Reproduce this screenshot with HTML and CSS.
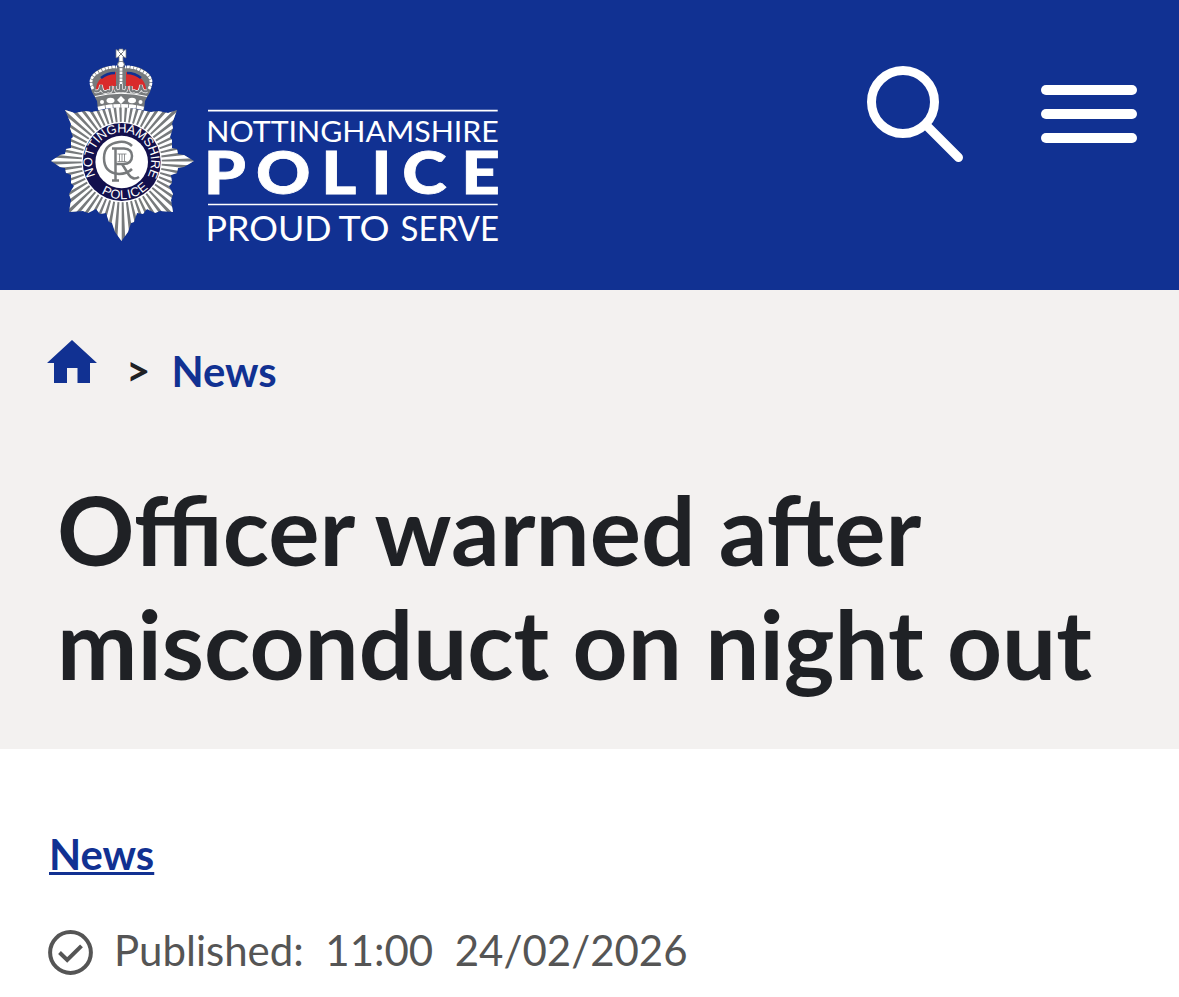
FILE: index.html
```html
<!DOCTYPE html>
<html lang="en">
<head>
    <meta charset="UTF-8">
    <meta name="viewport" content="width=device-width, initial-scale=1.0">
    <title>Officer warned after misconduct on night out</title>
    <link rel="stylesheet" href="styles.css">
</head>
<body>
    <header class="site-header">
        <a class="logo" aria-label="Nottinghamshire Police">
            <svg width="460" height="210" viewBox="48 46 460 210">
                <defs>
                    <clipPath id="star">
                        <path d="M51 161L60 155L65 154L66 149L71 148L71 139L73 137L70 128L71 124L65 110L75 113L85 111L92 112L121 106L151 112L158 111L168 113L177 110L172 124L173 128L170 137L172 140L172 148L177 149L178 154L184 155L194 161L184 167L178 168L177 173L171 175L172 183L169 186L173 194L171 200L173 212L160 211L155 213L147 209L143 214L137 213L134 222L131 223L128 232L121.500 241L115 232L112 223L109 222L106 213L100 214L96 209L88 213L83 211L69 212L71 200L69 194L74 186L71 183L71 175L66 173L65 168L60 167Z"/>
                    </clipPath>
                    <path id="ringTop" d="M95.600 175.500A29.400 29.400 0 1 1 147.800 175.500"/>
                    <path id="ringBottom" d="M84 164A37.800 37.800 0 0 0 159.400 164"/>
                </defs>

                <!-- star -->
                <g clip-path="url(#star)">
                    <rect x="48" y="100" width="150" height="145" fill="#777a7c"/>
                    <circle class="rays" cx="121.700" cy="161.500" r="60" pathLength="120"/>
                </g>

                <!-- crown -->
                <path d="M98 110L97 101L92 92Q86 76 98 70Q109 63 121 68Q133 63 144 70Q156 76 150 92L145 101L144 110Q121 104 98 110Z" fill="#777a7c"/>
                <path d="M96 90Q96 76 116 72V90ZM126 72Q146 76 146 90H126Z" fill="#d92a2b"/>
                <path d="M101 78Q107 73 115 73M141 78Q135 73 127 73" stroke="#113192" stroke-width="2.500" fill="none"/>
                <path class="beads" d="M93 89Q87 78 99 71.500Q109 66 117 67M149 89Q155 78 143 71.500Q133 66 125 67"/>
                <path class="beads" d="M121 68V85"/>
                <path class="fleur-edge" d="M95 91Q100 93 101 85Q102 95 108 91Q112 93 111 86M147 91Q142 93 141 85Q140 95 134 91Q130 93 131 86M121 84V92M115 86Q115 94 121 90Q127 94 127 86"/>
                <path class="fleurs" d="M95 91Q100 93 101 85Q102 95 108 91Q112 93 111 86M147 91Q142 93 141 85Q140 95 134 91Q130 93 131 86M121 84V92M115 86Q115 94 121 90Q127 94 127 86"/>
                <path d="M95 96.500Q121 90 147 96.500" stroke="#fff" stroke-width="1" fill="none"/>
                <g fill="#fff">
                    <ellipse cx="110.500" cy="100.500" rx="4" ry="2.700"/>
                    <ellipse cx="132" cy="100.500" rx="4" ry="2.700"/>
                    <path d="M121 96l4 4-4 4-4-4z"/>
                    <circle cx="102" cy="102" r="2"/>
                    <circle cx="140.500" cy="102" r="2"/>
                </g>
                <path class="ermine" d="M98 108.500Q121 103 144 108.500"/>
                <circle cx="121" cy="64.500" r="3.300" fill="#fff" stroke="#777a7c"/>
                <path d="M116 49.500l3 1.500V49h4v2l3-1.500v8.500l-3-1.500v5h-4v-5l-3 1.500z" fill="#fff" stroke="#777a7c" stroke-width=".7"/>
                <path d="M118.500 51.500l5 5M123.500 51.500l-5 5" stroke="#777a7c" stroke-width="1"/>

                <!-- centre disc -->
                <circle cx="121.700" cy="162" r="40.200" fill="#fff"/>
                <circle cx="121.700" cy="162" r="39" fill="#13104d"/>
                <circle cx="121.700" cy="162" r="26.300" fill="#fff"/>
                <text class="ring-text"><textPath href="#ringTop" textLength="121">NOTTINGHAMSHIRE</textPath></text>
                <text class="ring-text"><textPath href="#ringBottom" startOffset="35" textLength="51">POLICE</textPath></text>
                <g class="cypher">
                    <path d="M132 146Q127 141 119 142Q104 144 104 158Q104 173 119 174Q127 174 132 169"/>
                    <path d="M112 148.500H124Q132 149 132 156Q132 164 123 164H116M115.500 149V180M112 180.500H119M122 164L129 175Q133 181 139 177"/>
                    <path d="M117.500 154H126.500M117.500 161.500H126.500M119.500 154V161.500M122 154V161.500M124.500 154V161.500" stroke-width=".8"/>
                </g>

                <!-- wordmark -->
                <path d="M208 110.700H497.700M208 204.500H497.700" stroke="#fff" stroke-width="1.700"/>
                <g fill="#fff">
                    <text x="206.300" y="141.700" font-size="29.500" textLength="292.500" lengthAdjust="spacingAndGlyphs">NOTTINGHAMSHIRE</text>
                    <text class="police" transform="scale(1.13 1)" x="180.300 226.600 284.300 328.500 356 408.200" y="193.800">POLICE</text>
                    <text x="205.500" y="240.700" font-size="35" textLength="126" lengthAdjust="spacingAndGlyphs">PROUD</text>
                    <text x="338.500" y="240.700" font-size="35" textLength="51" lengthAdjust="spacingAndGlyphs">TO</text>
                    <text x="400.500" y="240.700" font-size="35" textLength="98.500" lengthAdjust="spacingAndGlyphs">SERVE</text>
                </g>
            </svg>
        </a>
        <div class="header-actions">
            <button class="icon-button" aria-label="Search">
                <svg width="98" height="98" viewBox="0 0 98 98" fill="none" stroke="#fff" stroke-width="9">
                    <circle cx="37" cy="37" r="31.500"/>
                    <path d="M60 60L92.500 92.500" stroke-linecap="round"/>
                </svg>
            </button>
            <button class="icon-button menu-button" aria-label="Menu">
                <span class="bar"></span>
                <span class="bar"></span>
                <span class="bar"></span>
            </button>
        </div>
    </header>

    <section class="page-title">
        <nav class="breadcrumb">
            <a class="home" aria-label="Home">
                <svg width="50" height="43" viewBox="0 0 50 43">
                    <path d="M25 0L50 23H43V43H30.500V28H20V43H7V23H0Z" fill="#113192"/>
                </svg>
            </a>
            <span class="separator">&gt;</span>
            <a class="crumb">News</a>
        </nav>
        <h1>Officer warned after misconduct on night out</h1>
    </section>

    <main class="article">
        <a class="category">News</a>
        <div class="published">
            <svg width="45" height="45" viewBox="0 0 45 45" fill="none" stroke="#555" stroke-width="4">
                <circle cx="22.500" cy="22.500" r="20.400"/>
                <path d="M11.500 22.500L19.200 30L33.500 15.800"/>
            </svg>
            <span class="label">Published:</span>
            <span class="time">11:00</span>
            <span class="date">24/02/2026</span>
        </div>
    </main>
</body>
</html>
```

FILE: styles.css
```css
* {
    box-sizing: border-box;
}

body {
    margin: 0;
    font-family: Lato, "Liberation Sans", sans-serif;
    font-size: 42px;
    color: #1f2125;
    background-color: #fff;
    height: 997px;
    overflow: hidden;
}

.site-header {
    display: flex;
    justify-content: space-between;
    align-items: flex-start;
    height: 290px;
    padding: 46px 42px 0 48px;
    background-color: #113192;
}

.logo svg {
    display: block;
}

.rays {
    fill: none;
    stroke: #fff;
    stroke-width: 50;
    stroke-dasharray: 1.1 0.9;
}

.beads {
    fill: none;
    stroke: #fff;
    stroke-width: 2.8;
    stroke-dasharray: 2.8 0.7;
}

.fleur-edge {
    fill: none;
    stroke: #fff;
    stroke-width: 3.6;
}

.fleurs {
    fill: none;
    stroke: #777a7c;
    stroke-width: 2.4;
}

.ermine {
    fill: none;
    stroke: #fff;
    stroke-width: 3.6;
    stroke-dasharray: 7 0.8;
}

.ring-text {
    font-family: "Liberation Sans", Arial, sans-serif;
    font-size: 12.8px;
    fill: #fff;
}

.cypher {
    fill: none;
    stroke: #777a7c;
    stroke-width: 2.5;
}

.police {
    font-size: 59.5px;
    font-weight: 900;
    stroke: #fff;
    stroke-width: 0.8px;
}

.header-actions {
    display: flex;
    gap: 77px;
    padding-top: 19px;
}

.icon-button {
    padding: 0;
    border: none;
    background: none;
    cursor: pointer;
}

.icon-button svg {
    display: block;
}

.menu-button {
    display: flex;
    flex-direction: column;
    gap: 14.5px;
    width: 96px;
    padding-top: 20px;
}

.bar {
    width: 100%;
    height: 9.5px;
    border-radius: 5px;
    background-color: #fff;
}

.page-title {
    height: 459px;
    padding: 50px 60px 0 47px;
    background-color: #f3f1f0;
}

.breadcrumb {
    display: flex;
    height: 60px;
    font-weight: 700;
}

.separator {
    margin: 5px 0 0 29px;
    font-size: 42px;
}

.crumb {
    margin: 6px 0 0 21px;
    font-size: 41.8px;
    color: #113192;
}

h1 {
    margin: 72px 0 0 10px;
    font-size: 96px;
    line-height: 114px;
    font-weight: 700;
}

.article {
    padding: 80px 48px 0;
}

.category {
    display: inline-block;
    line-height: 50px;
    margin-left: 1px;
    font-weight: 700;
    font-size: 41.8px;
    color: #113192;
    text-decoration: underline;
    text-decoration-thickness: 3px;
    text-underline-offset: 2px;
}

.published {
    display: flex;
    align-items: center;
    margin-top: 46px;
    line-height: 50px;
    color: #555;
}

.published svg {
    margin-top: 4px;
}

.label {
    margin-left: 21px;
}

.time,
.date {
    margin-left: 21.5px;
}
```
